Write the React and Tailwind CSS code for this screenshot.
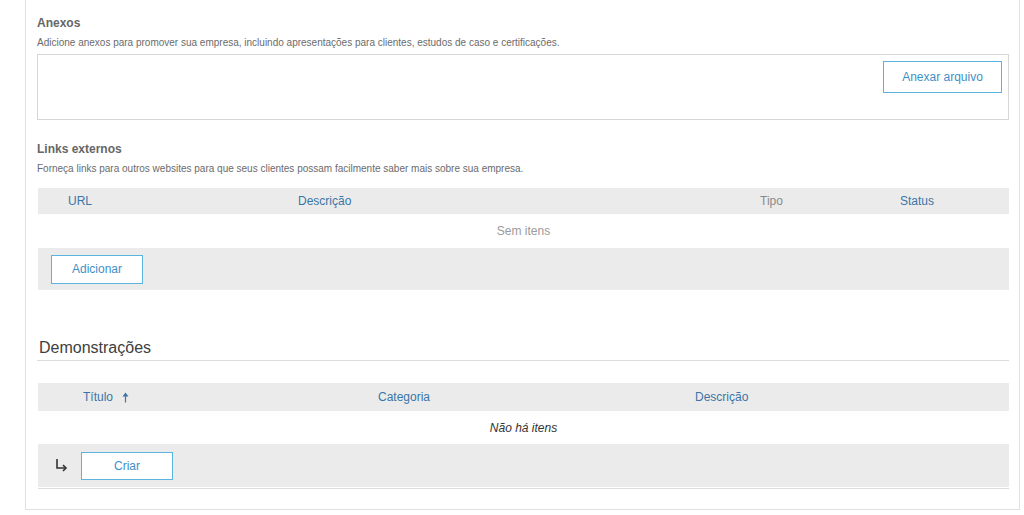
export default function App() {
  return (
    <div className="h-[515px] w-full bg-white pl-[25px] pr-[4px] font-['Liberation_Sans',Arial,sans-serif] text-[#666]">
      <div className="h-[510px] border-x border-b border-[#e0e0e0] pl-[11px] pr-[10px]">
        {/* ANEXOS */}
        <div className="pt-[16px]">
          <h3 className="text-[12px] font-bold leading-[14px] text-[#666]">Anexos</h3>
          <p className="mt-[7px] text-[10px] leading-[12px] text-[#6b6b6b]">
            Adicione anexos para promover sua empresa, incluindo apresentações para clientes, estudos de caso e certificações.
          </p>
          <div className="mt-[5px] flex h-[66px] justify-end border border-[#d6d6d6] pr-[6px] pt-[6px]">
            <button className="h-[32px] w-[119px] border border-[#5ab4de] bg-white text-[12px] text-[#3f8fc8]">
              Anexar arquivo
            </button>
          </div>
        </div>

        {/* LINKS EXTERNOS */}
        <div className="pt-[22px]">
          <h3 className="text-[12px] font-bold leading-[14px] text-[#666]">Links externos</h3>
          <p className="mt-[7px] text-[10px] leading-[12px] text-[#6b6b6b]">
            Forneça links para outros websites para que seus clientes possam facilmente saber mais sobre sua empresa.
          </p>
          <div className="ml-[1px] mt-[13px]">
            <div className="flex h-[26px] items-center bg-[#ebebeb] pl-[30px] text-[12px]">
              <span className="w-[230px] text-[#3a76a8]">URL</span>
              <span className="w-[462px] text-[#3a76a8]">Descrição</span>
              <span className="w-[140px] text-[#8a8a8a]">Tipo</span>
              <span className="text-[#3a76a8]">Status</span>
            </div>
            <div className="flex h-[34px] items-center justify-center text-[12px] text-[#9a9a9a]">Sem itens</div>
            <div className="flex h-[42px] items-center bg-[#ebebeb] pl-[13px]">
              <button className="h-[29px] w-[92px] border border-[#5ab4de] bg-white text-[12px] text-[#3f8fc8]">
                Adicionar
              </button>
            </div>
          </div>
        </div>

        {/* DEMONSTRAÇÕES */}
        <div className="pt-[48px]">
          <h2 className="border-b border-[#dcdcdc] pb-[3px] pl-[2px] text-[16px] leading-[19px] text-[#404040]">
            Demonstrações
          </h2>
          <div className="ml-[1px] mt-[22px]">
            <div className="flex h-[28px] items-center bg-[#ebebeb] pl-[45px] text-[12px] text-[#3a76a8]">
              <span className="flex w-[295px] items-center gap-[9px]">
                Título
                <svg width="7" height="11" viewBox="0 0 7 11">
                  <path d="M3.5 0.5 L6.5 4.5 L0.5 4.5 Z" fill="#3a76a8" />
                  <path d="M3.5 4 V10.5" stroke="#3a76a8" strokeWidth="1.2" />
                </svg>
              </span>
              <span className="w-[317px]">Categoria</span>
              <span>Descrição</span>
            </div>
            <div className="flex h-[33px] items-center justify-center text-[12px] italic text-[#333]">Não há itens</div>
            <div className="flex h-[43px] items-center bg-[#ebebeb] pl-[16px]">
              <svg width="14" height="14" viewBox="0 0 14 14" className="mr-[13px] mt-[-2px]">
                <path d="M3 1 V10 H11" stroke="#333" strokeWidth="1.6" fill="none" />
                <path d="M9 7 L12 10 L9 13" stroke="#333" strokeWidth="1.6" fill="none" />
              </svg>
              <button className="h-[28px] w-[92px] border border-[#5ab4de] bg-white text-[12px] text-[#3f8fc8]">
                Criar
              </button>
            </div>
            <div className="mt-[1px] border-t border-[#dcdcdc]" />
          </div>
        </div>
      </div>
    </div>
  );
}
